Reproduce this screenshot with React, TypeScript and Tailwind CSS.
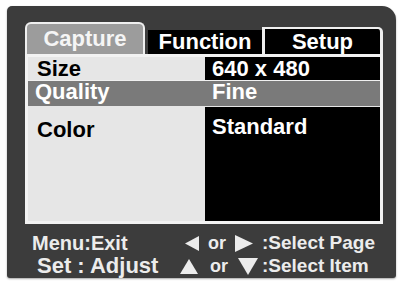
const font = { fontFamily: '"Liberation Sans", Arial, sans-serif' };

const TriLeft = () => (
  <svg width="14" height="15" viewBox="0 0 14 15" className="shrink-0">
    <polygon points="14,0 14,15 0,7.5" fill="#ececec" />
  </svg>
);
const TriRight = () => (
  <svg width="18" height="17" viewBox="0 0 18 17" className="shrink-0">
    <polygon points="0,0 18,8.5 0,17" fill="#ececec" />
  </svg>
);
const TriUp = () => (
  <svg width="18" height="15" viewBox="0 0 18 15" className="shrink-0">
    <polygon points="9,0 18,15 0,15" fill="#ececec" />
  </svg>
);
const TriDown = () => (
  <svg width="20" height="17" viewBox="0 0 20 17" className="shrink-0">
    <polygon points="0,0 20,0 10,17" fill="#ececec" />
  </svg>
);

export default function App() {
  return (
    <div className="w-[401px] h-[281px] bg-white overflow-hidden font-bold" style={font}>
      <div className="ml-[7px] mt-[6px] w-[389px] h-[272px] bg-[#3c3c3c] rounded-tl-[5px] rounded-tr-[14px] rounded-b-[3px] pl-[18px] pt-[16px] shadow-[0_1px_2px_rgba(0,0,0,0.35)]">
        {/* Tabs */}
        <div className="flex items-end h-[32px] w-[358px]">
          <div className="w-[120px] h-[32px] bg-[#9c9c9c] border-[2px] border-b-0 border-[#efefef] rounded-t-[6px] flex items-center justify-center text-[22px] leading-[22px] text-[#f5f5f5]">
            Capture
          </div>
          <div className="ml-[3px] w-[114px] h-[24px] bg-black flex items-center justify-center text-[22px] leading-[22px] text-white">
            Function
          </div>
          <div className="w-[121px] h-[27px] bg-black border-l-[3px] border-t-[2px] border-r-[3px] border-[#efefef] rounded-tr-[5px] flex items-center justify-center text-[22px] leading-[22px] text-white pt-[1px]">
            Setup
          </div>
        </div>

        {/* Content */}
        <div className="w-[358px] h-[170px] border-[3px] border-[#f2f2f2] bg-[#e6e6e6] flex flex-col text-[22px] leading-[22px]">
          <div className="flex h-[23px]">
            <div className="w-[177px] pl-[9px] text-black leading-[23px]">Size</div>
            <div className="flex-1 bg-black text-white pl-[7px] leading-[23px]">640 x 480</div>
          </div>
          <div className="h-[1px] bg-[#f0f0f0]" />
          <div className="flex h-[25px] bg-[#7a7a7a] text-white">
            <div className="w-[177px] pl-[7px]">Quality</div>
            <div className="flex-1 pl-[7px]">Fine</div>
          </div>
          <div className="flex flex-1">
            <div className="w-[177px] pl-[9px] pt-[13px] text-black">Color</div>
            <div className="flex-1 bg-black text-white pl-[7px] pt-[9px] mt-[1px]">Standard</div>
          </div>
        </div>

        {/* Footer */}
        <div className="text-[#ececec]">
          <div className="flex items-center h-[20px] mt-[9px]">
            <span className="w-[160px] pl-[7px] text-[20px] leading-[20px]">Menu:Exit</span>
            <TriLeft />
            <span className="ml-[9px] text-[18px] leading-[20px]">or</span>
            <span className="ml-[9px]"><TriRight /></span>
            <span className="ml-[9px] text-[19px] leading-[20px]">:Select Page</span>
          </div>
          <div className="flex items-center h-[22px] mt-[2px]">
            <span className="w-[155px] pl-[12px] text-[22px] leading-[22px] whitespace-pre">Set : Adjust</span>
            <TriUp />
            <span className="ml-[12px] text-[18px] leading-[20px]">or</span>
            <span className="ml-[10px]"><TriDown /></span>
            <span className="ml-[4px] text-[19px] leading-[20px]">:Select Item</span>
          </div>
        </div>
      </div>
    </div>
  );
}
